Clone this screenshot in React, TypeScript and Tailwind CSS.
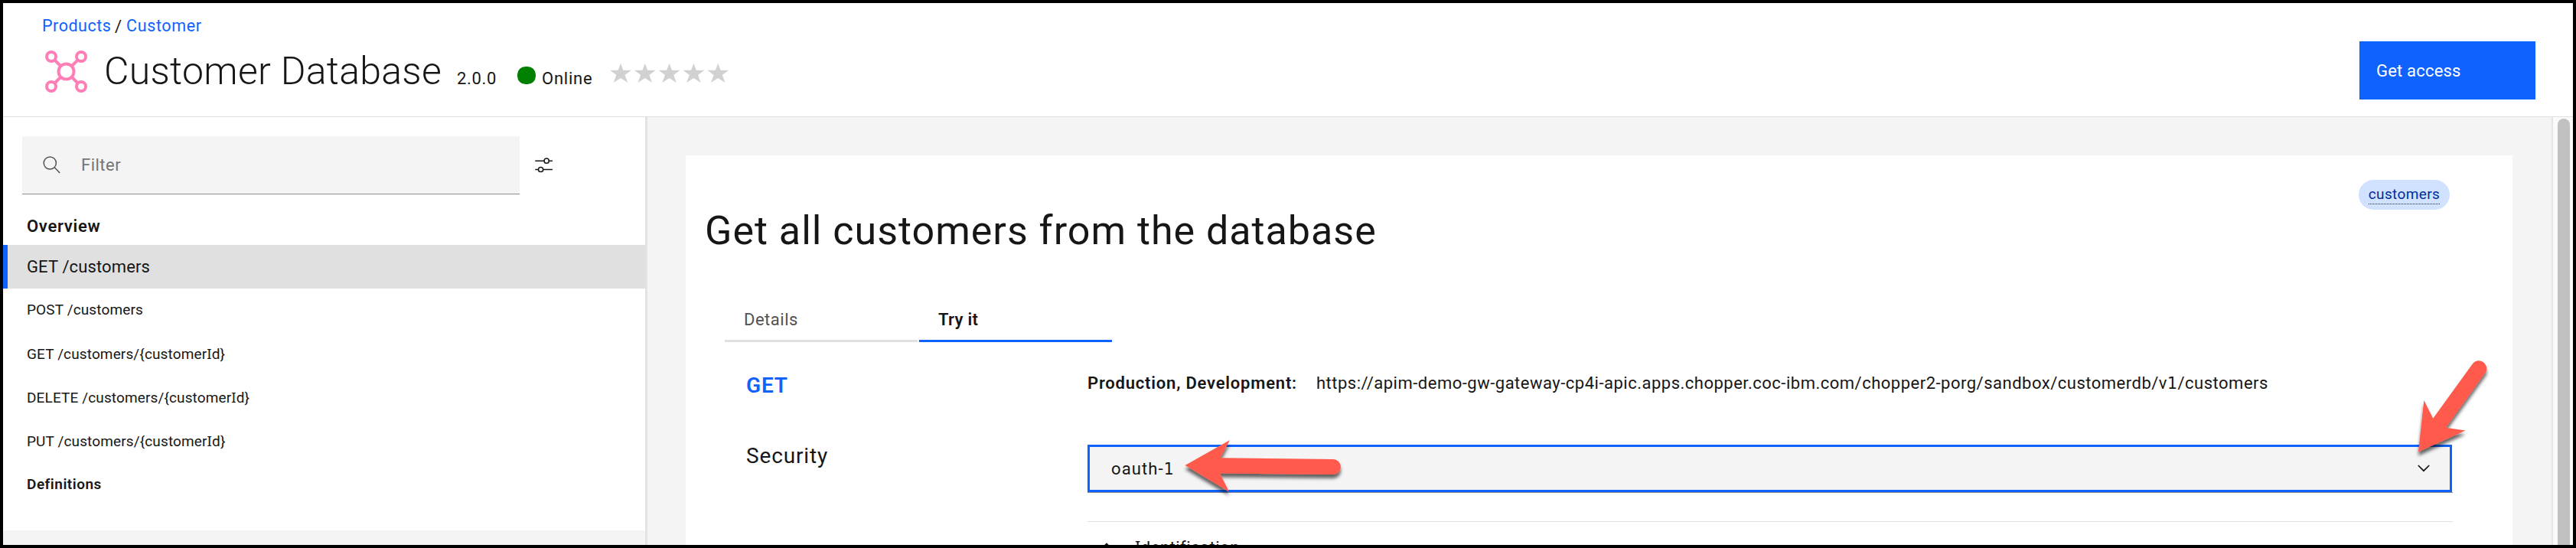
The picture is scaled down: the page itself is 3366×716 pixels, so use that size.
import React from "react";

type NavItem = { method: string; path: string; param?: boolean };

const operations: NavItem[] = [
  { method: "POST", path: "/customers" },
  { method: "GET", path: "/customers/", param: true },
  { method: "DELETE", path: "/customers/", param: true },
  { method: "PUT", path: "/customers/", param: true },
];

function SerifI() {
  return <span className="font-['Noto_Sans'] text-[0.98em]">I</span>;
}

function FootedOne() {
  return <span className="font-['DejaVu_Sans'] text-[0.93em]">1</span>;
}

function ApiIcon() {
  return (
    <svg className="mt-px h-[55px] w-[55px] shrink-0 self-start" viewBox="0 0 55 55" fill="none" stroke="#ff7eb6" strokeWidth="4">
      <path d="M13 13 20 20M42 13 35 20M13 42 20 35M42 42 35 35" />
      <circle cx="27.5" cy="27.5" r="10" />
      <circle cx="8" cy="8" r="6" />
      <circle cx="47" cy="8" r="6" />
      <circle cx="8" cy="47" r="6" />
      <circle cx="47" cy="47" r="6" />
    </svg>
  );
}

function Stars() {
  return (
    <svg className="mt-[17px] ml-[23px] h-[27px] w-[156px] shrink-0 self-start" viewBox="0 0 156 27" fill="#d1d1d1">
      {[0, 1, 2, 3, 4].map((n) => (
        <path
          key={n}
          transform={`translate(${n * 31.8} 0.7)`}
          d="M14 0 17.4 9H28L19.6 15.3 23.3 25.4 14 19.3 4.7 25.4 8.4 15.3 0 9H10.6Z"
        />
      ))}
    </svg>
  );
}

function Header() {
  return (
    <header className="flex h-[149px] shrink-0 items-start justify-between border-b border-[#e0e0e0] bg-white">
      <div className="pt-4 pl-[51px]">
        <nav className="flex h-7 text-[21.5px] leading-7">
          <a className="w-[95px] shrink-0 tracking-[0.5px] text-[#0f62fe]">Products</a>
          <span className="w-[15px] text-[22px] leading-[29px]">/</span>
          <a className="tracking-[0.65px] text-[#0f62fe]">Customer</a>
        </nav>
        <div className="mt-[17px] flex items-baseline pl-1 whitespace-nowrap">
          <ApiIcon />
          <h1 className="ml-[22px] w-[461px] shrink-0 text-[50px] leading-[56px] font-light tracking-[0.28px]">
            Customer Database
          </h1>
          <span className="w-[79px] shrink-0 text-[22px] leading-7 tracking-[0.67px]">2.0.0</span>
          <svg className="h-[23px] w-6 shrink-0" viewBox="0 0 24 23">
            <rect width="24" height="23" rx="10.5" fill="#008000" />
          </svg>
          <span className="ml-2 w-[66px] shrink-0 text-[22px] leading-7 tracking-[0.77px]">Online</span>
          <Stars />
        </div>
      </div>
      <button className="mt-[50px] mr-[49px] flex h-[76px] w-[230px] items-center bg-[#0f62fe] pl-[22px] text-[22px] tracking-[0.19px] text-white">
        Get access
      </button>
    </header>
  );
}

function Sidebar() {
  return (
    <aside className="w-[842px] shrink-0 border-r-[3px] border-[#e3e3e3]">
      <div className="h-[540px] bg-white pt-[25px] tracking-[0.13px]">
        <div className="flex items-center pl-[25px]">
          <div className="flex h-[76px] w-[650px] items-center border-b border-[#8d8d8d] bg-[#f4f4f4] pl-[27px]">
            <svg className="h-[23px] w-[23px]" viewBox="0 0 23 23" fill="none" stroke="#525252" strokeWidth="1.5">
              <circle cx="9.3" cy="9" r="8.1" />
              <path d="M15.2 14.8 22.2 22" />
            </svg>
            <span className="ml-[27px] text-[22px] tracking-[0.5px] text-[#757575]">Filter</span>
          </div>
          <svg className="ml-5 h-5 w-6" viewBox="0 0 24 20" fill="none" stroke="#161616" strokeWidth="1.5">
            <path d="M0.3 4.2H12M18.4 4.2H22.9M0.3 15.5H4.4M10.8 15.5H22.9" />
            <circle cx="15.2" cy="4.2" r="3.1" />
            <circle cx="7.6" cy="15.5" r="3.1" />
          </svg>
        </div>
        <div className="mt-[9px] flex h-[57px] items-center pt-2 pl-[31px] text-[22px] font-semibold tracking-[0.7px]">
          Overview
        </div>
        <div className="flex h-[57px] items-center border-l-[6px] border-[#0f62fe] bg-[#e0e0e0] pl-[25px] text-[22px]">
          GET /customers
        </div>
        {operations.map((op) => (
          <div key={op.method} className="flex h-[57px] items-center pl-[31px] text-[19px] whitespace-pre">
            <span>
              {op.method} {op.path}
              {op.param && (
                <>
                  {"{customer"}
                  <SerifI />
                  {"d}"}
                </>
              )}
            </span>
          </div>
        ))}
        <div className="flex h-[57px] items-center pl-[31px] text-[19px] font-semibold tracking-[0.5px]">Definitions</div>
      </div>
    </aside>
  );
}

function Details() {
  return (
    <section className="h-[509px] w-[2387px] overflow-hidden bg-white">
      <div className="flex justify-end pt-8 pr-[82px]">
        <span className="flex h-[39px] w-[119px] items-start justify-center rounded-full bg-[#d0e2ff] pt-[7px] text-[19px] text-[#002d9c]">
          <span className="border-b border-dotted border-[#002d9c] leading-6 tracking-[0.4px]">customers</span>
        </span>
      </div>
      <h2 className="pl-[25px] text-[52px] leading-[56px] tracking-[0.99px]">Get all customers from the database</h2>
      <div className="mt-[61px] flex gap-0.5 pl-[51px] text-[22px]">
        <div className="flex h-14 w-[252px] items-center border-b-[3px] border-[#e0e0e0] pl-[25px] tracking-[0.51px] text-[#525252]">
          Details
        </div>
        <div className="flex h-14 w-[252px] items-center border-b-[3px] border-[#0f62fe] pl-[25px] font-semibold tracking-[0.3px]">
          Try it
        </div>
      </div>
      <div className="mt-[37px] flex h-[94px] pl-[79px]">
        <div className="w-[446px] shrink-0 pt-[2px] text-[28px] leading-9 font-semibold tracking-[0.8px] text-[#0f62fe]">GET</div>
        <div className="flex pt-px text-[22px] leading-8 whitespace-nowrap">
          <span className="w-[299px] shrink-0 font-semibold tracking-[0.8px]">Production, Development:</span>
          <span className="tracking-[0.5px]">
            https://apim-demo-gw-gateway-cp4i-apic.apps.chopper.coc-ibm.com/chopper2-porg/sandbox/customerdb/v
            <FootedOne />
            /customers
          </span>
        </div>
      </div>
      <div className="flex pl-[79px]">
        <div className="w-[446px] shrink-0 text-[28px] leading-9 tracking-[0.85px]">Security</div>
        <div className="w-[1784px] shrink-0 pt-[3px]">
          <div className="border-b border-[#8d8d8d]">
            <div className="flex h-[62px] w-[1783px] items-center justify-between border-[3px] border-[#0f62fe] bg-[#f4f4f4] pr-[26px] pl-7">
              <span className="text-[22px] tracking-[1.1px]">
                oauth-
                <FootedOne />
              </span>
              <svg className="h-[10px] w-4" viewBox="0 0 16 10" fill="none" stroke="#161616" strokeWidth="1.7">
                <path d="M0.8 1 8 8.2 15.2 1" />
              </svg>
            </div>
          </div>
          <div className="mt-[37px] border-t border-[#e0e0e0] pt-[17px]">
            <div className="flex text-[22px] leading-8 tracking-[0.5px]">
              <svg className="mt-[10px] ml-[17px] h-[10px] w-4 shrink-0" viewBox="0 0 16 10" fill="none" stroke="#161616" strokeWidth="1.7">
                <path d="M0.8 8.6 8 1.4 15.2 8.6" />
              </svg>
              <span className="ml-[29px]">
                <SerifI />
                dentification
              </span>
            </div>
          </div>
        </div>
      </div>
    </section>
  );
}

function Arrows() {
  return (
    <svg
      className="pointer-events-none absolute -top-1 -left-1 h-[716px] w-[3366px]"
      viewBox="0 0 3366 716"
      fill="#ff5a4b"
    >
      <defs>
        <filter id="arrow-shadow" x="-20%" y="-20%" width="140%" height="150%">
          <feDropShadow dx="0" dy="5" stdDeviation="2" floodColor="#000" floodOpacity="0.6" />
        </filter>
      </defs>
      <path
        filter="url(#arrow-shadow)"
        d="M1548.5 608 1607 575 1594.5 598.3 1742 600A10 10 0 0 1 1742 620L1594 618.5 1606 642.5Z"
      />
      <path
        filter="url(#arrow-shadow)"
        d="M3160 590.5 3167.3 523 3179.2 546.8 3231.5 474.5A10.3 10.3 0 0 1 3248.5 485.5L3196 558.8 3221.5 562.5Z"
      />
    </svg>
  );
}

export default function App() {
  return (
    <div className="relative flex h-[716px] w-[3366px] flex-col overflow-hidden border-4 border-black bg-[#f4f4f4] font-[Roboto,sans-serif] text-[#161616]">
      <Header />
      <div className="flex h-[559px]">
        <Sidebar />
        <main className="w-[2488px] shrink-0 pt-[50px] pl-[50px]">
          <Details />
        </main>
        <div className="flex w-7 shrink-0 border-l-2 border-[#e6e6e6] bg-[#fafafa] pt-[2px] pl-[6px]">
          <div className="h-[600px] w-4 rounded-full bg-[#c1c1c1]" />
        </div>
      </div>
      <Arrows />
    </div>
  );
}
